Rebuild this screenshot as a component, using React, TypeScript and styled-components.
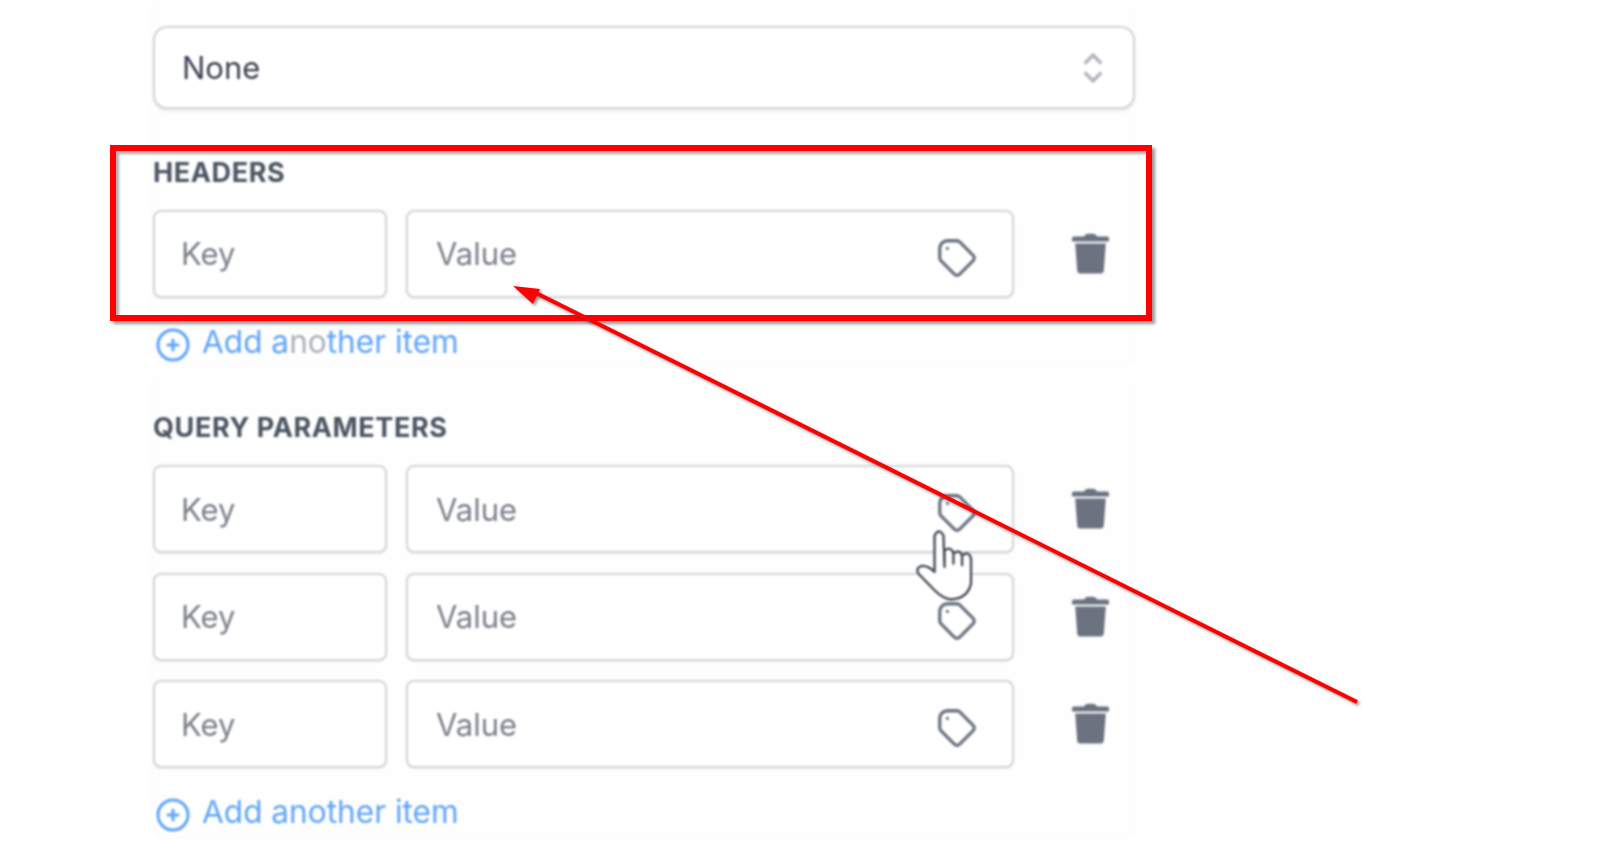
import React from 'react';
import styled, { createGlobalStyle } from 'styled-components';

const GlobalStyle = createGlobalStyle`
  html, body {
    margin: 0;
    padding: 0;
    background: #ffffff;
    font-family: Inter, "Liberation Sans", sans-serif;
  }
`;

const Page = styled.div`
  position: relative;
  width: 1600px;
  height: 868px;
  overflow: hidden;
  padding-left: 153px;
  box-sizing: border-box;
`;

const Content = styled.div`
  width: 982px;
  filter: blur(0.8px);
`;

const Panel = styled.section<{ $top?: number; $height: number }>`
  box-sizing: border-box;
  height: ${p => p.$height}px;
  padding-top: ${p => p.$top ?? 0}px;
  margin-bottom: 10px;
  background: #fefefe;
  border-radius: 0 0 14px 14px;
  box-shadow: 0 1px 3px rgba(17, 24, 39, 0.03), -2px 0 0 #fefefe;
`;

const Select = styled.div`
  box-sizing: border-box;
  display: flex;
  align-items: center;
  justify-content: space-between;
  height: 83px;
  margin-bottom: 47px;
  padding: 0 18px 0 27px;
  background: #ffffff;
  border: 2px solid #d1d5db;
  border-radius: 14px;
  box-shadow: 0 2px 3px rgba(17, 24, 39, 0.1);
  font-size: 31px;
  color: #3b4250;
`;

const SectionLabel = styled.div<{ $gap: number }>`
  height: 34px;
  line-height: 34px;
  margin-bottom: ${p => p.$gap}px;
  font-size: 27px;
  font-weight: 700;
  letter-spacing: 0.6px;
  text-transform: uppercase;
  color: #4b5563;
`;

const Rows = styled.div`
  display: flex;
  flex-direction: column;
  gap: 19.6px;
`;

const Row = styled.div`
  display: flex;
  align-items: center;
`;

const Field = styled.div<{ $width: number }>`
  box-sizing: border-box;
  display: flex;
  align-items: center;
  justify-content: space-between;
  width: ${p => p.$width}px;
  height: 88px;
  padding: 0 36px 0 28px;
  background: #ffffff;
  border: 2px solid #d1d5db;
  border-radius: 8px;
  box-shadow: 0 1px 2px rgba(17, 24, 39, 0.08);
  font-size: 31px;
  color: #7b808a;
`;

const KeyField = styled(Field)`
  margin-right: 19px;
  padding-left: 26px;
`;

const TagIcon = styled.svg`
  width: 46px;
  height: 46px;
  margin-top: 8px;
  margin-right: -4px;
  fill: none;
  stroke: #6b7280;
  stroke-width: 1.7;
  stroke-linecap: round;
  stroke-linejoin: round;
  flex: none;
`;

const TrashIcon = styled.svg`
  width: 37px;
  height: 42px;
  margin: 0 0 2px 58px;
  fill: #6b7280;
  flex: none;
`;

const AddItem = styled.div<{ $top: number }>`
  display: flex;
  align-items: center;
  height: 40px;
  margin-top: ${p => p.$top}px;
  color: #60a5fa;
  font-size: 31.6px;
`;

const PlusIcon = styled.svg`
  width: 40px;
  height: 40px;
  margin: 7px 9px 0 0;
  fill: none;
  stroke: #60a5fa;
  stroke-width: 1.8;
  stroke-linecap: round;
  stroke-linejoin: round;
  flex: none;
`;

const Faded = styled.span`
  color: #a9b1bb;
`;

const Chevrons = styled.svg`
  width: 44px;
  height: 44px;
  fill: none;
  stroke: #b4b8bf;
  stroke-width: 2;
  stroke-linecap: round;
  stroke-linejoin: round;
`;

// Annotations drawn over the screenshot
const RedBox = styled.div`
  position: absolute;
  left: 110px;
  top: 145px;
  width: 1042px;
  height: 176px;
  box-sizing: border-box;
  border: 6px solid #ff0000;
  box-shadow: 3px 3px 3px rgba(70, 70, 70, 0.55), inset 3px 3px 3px rgba(70, 70, 70, 0.45);
`;

const Overlay = styled.svg`
  position: absolute;
  left: 0;
  top: 0;
  width: 1600px;
  height: 868px;
  pointer-events: none;
  filter: drop-shadow(2px 2px 1.5px rgba(60, 60, 60, 0.55));
`;

const HandCursor = styled.svg`
  position: absolute;
  left: 913px;
  top: 527px;
  width: 63px;
  height: 75px;
  fill: #ffffff;
  stroke: #3f4550;
  stroke-width: 7;
  stroke-linecap: round;
  stroke-linejoin: round;
  filter: blur(0.8px);
`;

const Tag = () => (
  <TagIcon viewBox="0 0 24 24">
    <path d="M7 7h.01M7 3h5c.512 0 1.024.195 1.414.586l7 7a2 2 0 010 2.828l-7 7a2 2 0 01-2.828 0l-7-7A1.994 1.994 0 013 12V7a4 4 0 014-4z" />
  </TagIcon>
);

const Trash = () => (
  <TrashIcon viewBox="0 0 37 41">
    <path d="M13 2.5C14 .8 23 .8 24 2.5L25 4h10c1.2 0 2 .8 2 2v2c0 .6-.4 1-1 1H1c-.6 0-1-.4-1-1V6c0-1.200.8-2 2-2h10z" />
    <path d="M3.200 11h30.600l-2 27c-.1 1.800-1.300 3-3 3H8.200c-1.700 0-2.900-1.200-3-3z" />
  </TrashIcon>
);

const KeyValueRow = () => (
  <Row>
    <KeyField $width={234}>Key</KeyField>
    <Field $width={608}>
      Value
      <Tag />
    </Field>
    <Trash />
  </Row>
);

const AddAnother: React.FC<{ top: number; faded?: boolean }> = ({ top, faded }) => (
  <AddItem $top={top}>
    <PlusIcon viewBox="0 0 24 24">
      <path d="M12 9v3m0 0v3m0-3h3m-3 0H9m12 0a9 9 0 11-18 0 9 9 0 0118 0z" />
    </PlusIcon>
    {faded ? (
      <span>
        Add a<Faded>no</Faded>ther item
      </span>
    ) : (
      <span>Add another item</span>
    )}
  </AddItem>
);

const App: React.FC = () => (
  <Page>
    <GlobalStyle />
    <Content>
      <Panel $top={26} $height={365}>
        <Select>
          None
          <Chevrons viewBox="0 0 24 24">
            <path d="M8 9l4-4 4 4m0 6l-4 4-4-4" />
          </Chevrons>
        </Select>
        <SectionLabel $gap={19.5}>Headers</SectionLabel>
        <KeyValueRow />
        <AddAnother top={23.5} faded />
      </Panel>
      <Panel $top={36} $height={462}>
        <SectionLabel $gap={20}>Query Parameters</SectionLabel>
        <Rows>
          <KeyValueRow />
          <KeyValueRow />
          <KeyValueRow />
        </Rows>
        <AddAnother top={23} />
      </Panel>
    </Content>

    <RedBox />
    <Overlay viewBox="0 0 1600 868">
      <path d="M1357 702L534 292" stroke="#ff0000" strokeWidth="4" fill="none" />
      <path d="M513 286L540 289L533 304Z" fill="#ff0000" />
    </Overlay>
    <HandCursor viewBox="100 170 190 225">
      <path d="M165 305V195Q178 170 192 195L195 290V240Q215 225 222 250V280V250Q240 235 248 255V285V255Q270 240 275 265V340Q265 385 215 388Q190 385 165 360L118 312Q105 295 125 287Q145 285 165 305Z" />
    </HandCursor>
  </Page>
);

export default App;
